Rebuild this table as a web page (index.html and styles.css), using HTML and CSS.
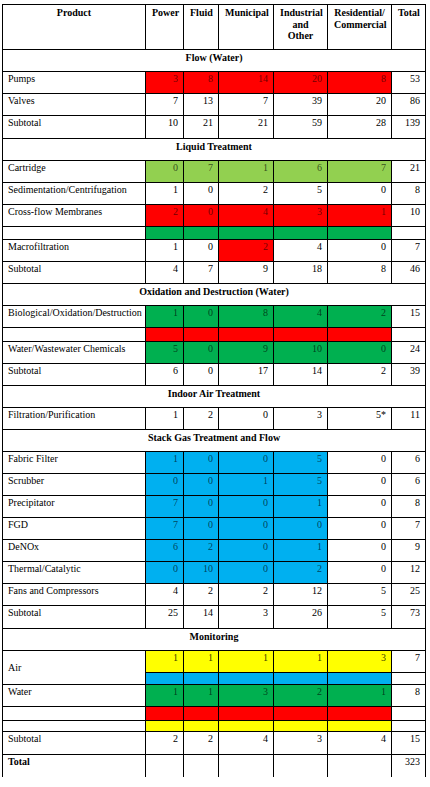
FILE: index.html
```html
<!DOCTYPE html>
<html>
<head>
<meta charset="utf-8">
<link rel="stylesheet" href="styles.css">
</head>
<body>
<table class="grid">
  <colgroup>
    <col class="c-prod"><col class="c-pow"><col class="c-flu"><col class="c-mun"><col class="c-ind"><col class="c-res"><col class="c-tot">
  </colgroup>
  <tr class="head">
    <th>Product</th><th>Power</th><th>Fluid</th><th>Municipal</th><th>Industrial and Other</th><th>Residential/ Commercial</th><th>Total</th>
  </tr>
  <tr class="sec"><td colspan="7">Flow (Water)</td></tr>
  <tr><td class="p">Pumps</td><td class="r">3</td><td class="r">8</td><td class="r">14</td><td class="r">20</td><td class="r">8</td><td>53</td></tr>
  <tr><td class="p">Valves</td><td>7</td><td>13</td><td>7</td><td>39</td><td>20</td><td>86</td></tr>
  <tr class="sub"><td class="p">Subtotal</td><td>10</td><td>21</td><td>21</td><td>59</td><td>28</td><td>139</td></tr>

  <tr class="sec"><td colspan="7">Liquid Treatment</td></tr>
  <tr><td class="p">Cartridge</td><td class="lg">0</td><td class="lg">7</td><td class="lg">1</td><td class="lg">6</td><td class="lg">7</td><td>21</td></tr>
  <tr><td class="p">Sedimentation/Centrifugation</td><td>1</td><td>0</td><td>2</td><td>5</td><td>0</td><td>8</td></tr>
  <tr><td class="p">Cross-flow Membranes</td><td class="r">2</td><td class="r">0</td><td class="r">4</td><td class="r">3</td><td class="r">1</td><td>10</td></tr>
  <tr class="band b13"><td class="p"></td><td class="g"></td><td class="g"></td><td class="g"></td><td class="g"></td><td class="g"></td><td></td></tr>
  <tr><td class="p">Macrofiltration</td><td>1</td><td>0</td><td class="r">2</td><td>4</td><td>0</td><td>7</td></tr>
  <tr><td class="p">Subtotal</td><td>4</td><td>7</td><td>9</td><td>18</td><td>8</td><td>46</td></tr>

  <tr class="sec"><td colspan="7">Oxidation and Destruction (Water)</td></tr>
  <tr><td class="p">Biological/Oxidation/Destruction</td><td class="g">1</td><td class="g">0</td><td class="g">8</td><td class="g">4</td><td class="g">2</td><td>15</td></tr>
  <tr class="band b14"><td class="p"></td><td class="r"></td><td class="r"></td><td class="r"></td><td class="r"></td><td class="r"></td><td></td></tr>
  <tr><td class="p">Water/Wastewater Chemicals</td><td class="g">5</td><td class="g">0</td><td class="g">9</td><td class="g">10</td><td class="g">0</td><td>24</td></tr>
  <tr><td class="p">Subtotal</td><td>6</td><td>0</td><td>17</td><td>14</td><td>2</td><td>39</td></tr>

  <tr class="sec"><td colspan="7">Indoor Air Treatment</td></tr>
  <tr><td class="p">Filtration/Purification</td><td>1</td><td>2</td><td>0</td><td>3</td><td>5*</td><td>11</td></tr>

  <tr class="sec"><td colspan="7">Stack Gas Treatment and Flow</td></tr>
  <tr><td class="p">Fabric Filter</td><td class="b">1</td><td class="b">0</td><td class="b">0</td><td class="b">5</td><td>0</td><td>6</td></tr>
  <tr><td class="p">Scrubber</td><td class="b">0</td><td class="b">0</td><td class="b">1</td><td class="b">5</td><td>0</td><td>6</td></tr>
  <tr><td class="p">Precipitator</td><td class="b">7</td><td class="b">0</td><td class="b">0</td><td class="b">1</td><td>0</td><td>8</td></tr>
  <tr><td class="p">FGD</td><td class="b">7</td><td class="b">0</td><td class="b">0</td><td class="b">0</td><td>0</td><td>7</td></tr>
  <tr><td class="p">DeNOx</td><td class="b">6</td><td class="b">2</td><td class="b">0</td><td class="b">1</td><td>0</td><td>9</td></tr>
  <tr><td class="p">Thermal/Catalytic</td><td class="b">0</td><td class="b">10</td><td class="b">0</td><td class="b">2</td><td>0</td><td>12</td></tr>
  <tr><td class="p">Fans and Compressors</td><td>4</td><td>2</td><td>2</td><td>12</td><td>5</td><td>25</td></tr>
  <tr class="sub"><td class="p">Subtotal</td><td>25</td><td>14</td><td>3</td><td>26</td><td>5</td><td>73</td></tr>

  <tr class="sec"><td colspan="7">Monitoring</td></tr>
  <tr><td class="p mid" rowspan="2">Air</td><td class="y">1</td><td class="y">1</td><td class="y">1</td><td class="y">1</td><td class="y">3</td><td>7</td></tr>
  <tr class="band b12"><td class="b"></td><td class="b"></td><td class="b"></td><td class="b"></td><td class="b"></td><td></td></tr>
  <tr><td class="p">Water</td><td class="g">1</td><td class="g">1</td><td class="g">3</td><td class="g">2</td><td class="g">1</td><td>8</td></tr>
  <tr class="band b14"><td class="p"></td><td class="r"></td><td class="r"></td><td class="r"></td><td class="r"></td><td class="r"></td><td></td></tr>
  <tr class="band b11"><td class="p"></td><td class="y"></td><td class="y"></td><td class="y"></td><td class="y"></td><td class="y"></td><td></td></tr>
  <tr class="sub"><td class="p">Subtotal</td><td>2</td><td>2</td><td>4</td><td>3</td><td>4</td><td>15</td></tr>
  <tr class="total"><td class="p strong">Total</td><td></td><td></td><td></td><td></td><td></td><td>323</td></tr>
</table>
</body>
</html>
```
FILE: styles.css
```css
html, body {
  margin: 0;
  padding: 0;
  background: #fff;
}
body {
  padding: 4px 0 0 2px;
  font-family: "Liberation Serif", "Times New Roman", Tinos, serif;
  font-size: 10px;
  line-height: 11.5px;
  color: #000;
}
.grid {
  border-collapse: collapse;
  table-layout: fixed;
  width: 423px;
  font-family: "Liberation Serif", "Times New Roman", Tinos, serif;
  font-size: 10px;
}
.c-prod { width: 143px; }
.c-pow { width: 38px; }
.c-flu { width: 35px; }
.c-mun { width: 55px; }
.c-ind { width: 54px; }
.c-res { width: 64px; }
.c-tot { width: 34px; }

.grid th,
.grid td {
  border: 1px solid #000;
  padding: 1px 5px 0 5px;
  vertical-align: top;
  text-align: right;
  overflow: hidden;
}
.grid tr { height: 22px; }
.grid tr.head { height: 45px; }
.grid th {
  font-weight: bold;
  text-align: center;
  padding: 2px 6px 0 6px;
}
.grid tr.sec td {
  font-weight: bold;
  text-align: center;
  padding-top: 2px;
}
.grid td.p { text-align: left; }
.grid td.mid { vertical-align: middle; }
.grid td.strong { font-weight: bold; }
.grid tr.sub { height: 23px; }

.grid tr.b11 { height: 11px; }
.grid tr.b12 { height: 12px; }
.grid tr.b13 { height: 13px; }
.grid tr.b14 { height: 14px; }
.grid tr.band td { padding-top: 0; padding-bottom: 0; line-height: 1px; }

.grid tr.total td { border-bottom: none; }

.r  { background: #ff0000; color: rgba(0, 0, 0, 0.6); }
.lg { background: #92d050; color: rgba(0, 0, 0, 0.65); }
.g  { background: #00b050; color: rgba(0, 0, 0, 0.65); }
.b  { background: #00b0f0; color: rgba(0, 0, 0, 0.65); }
.y  { background: #ffff00; color: rgba(0, 0, 0, 0.8); }
```
